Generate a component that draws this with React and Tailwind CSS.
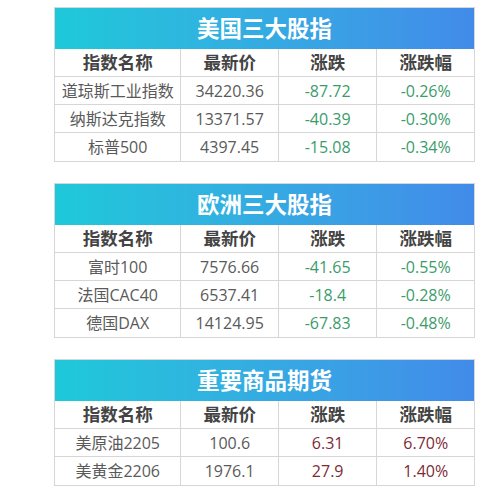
const sections = [
  {
    title: '美国三大股指',
    rows: [
      ['道琼斯工业指数', '34220.36', '-87.72', '-0.26%'],
      ['纳斯达克指数', '13371.57', '-40.39', '-0.30%'],
      ['标普500', '4397.45', '-15.08', '-0.34%'],
    ],
  },
  {
    title: '欧洲三大股指',
    rows: [
      ['富时100', '7576.66', '-41.65', '-0.55%'],
      ['法国CAC40', '6537.41', '-18.4', '-0.28%'],
      ['德国DAX', '14124.95', '-67.83', '-0.48%'],
    ],
  },
  {
    title: '重要商品期货',
    rows: [
      ['美原油2205', '100.6', '6.31', '6.70%'],
      ['美黄金2206', '1976.1', '27.9', '1.40%'],
    ],
  },
]

const cols = ['指数名称', '最新价', '涨跌', '涨跌幅']
const widths = ['w-[126px]', 'w-[98px]', 'w-[99px]', 'w-[98px]']

function QuoteTable({ title, rows }) {
  return (
    <div className="w-[421px] border border-[#d6d6d6]">
      <div className="flex h-[41px] items-center justify-center bg-gradient-to-r from-[#1dc9d9] to-[#428be9] text-[22.5px] font-bold text-white">
        {title}
      </div>
      <div className="flex h-[28px] border-b border-[#d6d6d6]">
        {cols.map((c, i) => (
          <div
            key={c}
            className={`${widths[i]} flex items-center justify-center text-[17.5px] font-bold text-[#444] ${i > 0 ? 'border-l border-[#d6d6d6]' : ''}`}
          >
            {c}
          </div>
        ))}
      </div>
      {rows.map((r, ri) => {
        const up = !r[2].startsWith('-')
        return (
          <div
            key={r[0]}
            className={`flex h-[28px] ${ri < rows.length - 1 ? 'border-b border-[#d6d6d6]' : ''}`}
          >
            {r.map((v, i) => (
              <div
                key={i}
                className={`${widths[i]} flex items-center justify-center text-[16px] ${i > 0 ? 'border-l border-[#d6d6d6]' : ''} ${
                  i < 2 ? 'text-[#5a5a5a]' : up ? 'text-[#7c2b36]' : 'text-[#3b9c6b]'
                }`}
              >
                {v}
              </div>
            ))}
          </div>
        )
      })}
    </div>
  )
}

export default function App() {
  return (
    <div
      className="flex h-[502px] w-[500px] flex-col gap-[21px] bg-white pl-[54px] pt-[7px]"
      style={{ fontFamily: '"Open Sans", "Noto Sans CJK SC", sans-serif' }}
    >
      {sections.map((s) => (
        <QuoteTable key={s.title} title={s.title} rows={s.rows} />
      ))}
    </div>
  )
}
